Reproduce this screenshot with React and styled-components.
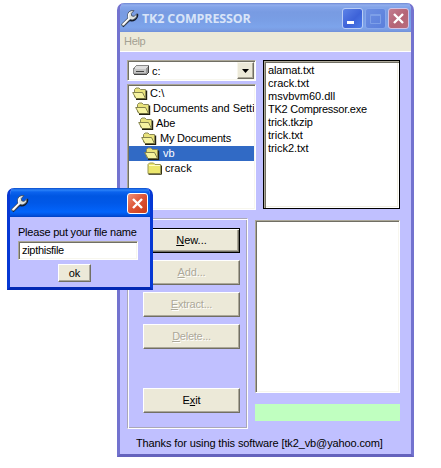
import React from "react";
import styled, { createGlobalStyle, css } from "styled-components";

const Global = createGlobalStyle`
  * { box-sizing: border-box; }
  body { margin: 0; background: #fff; overflow: hidden; }
  #root { font: 11px/13px "Liberation Sans", Arial, sans-serif; color: #000; }
`;

const Desktop = styled.div`
  position: relative;
  width: 441px;
  height: 468px;
  padding: 3px 0 0 117px;
`;

const Text = styled.span`
  white-space: pre;
  letter-spacing: ${(p) => p.$track || 0}px;
`;

const sunken = css`
  background: #fff;
  border: 1px solid;
  border-color: #aca899 #fff #fff #aca899;
  box-shadow: inset 1px 1px #716f64, inset -1px -1px #f7f6ee;
`;

const MainWindow = styled.div`
  width: 297px;
  height: 454px;
  display: flex;
  flex-direction: column;
  border: solid #7373cf;
  border-width: 0 3px 3px;
  border-bottom-color: #6462bd;
  border-radius: 7px 7px 0 0;
  background: #c0c0ff;
  overflow: hidden;
`;

const TitleBar = styled.div`
  height: 29px;
  flex: none;
  margin: 0 -3px;
  display: flex;
  align-items: center;
  padding: 2px 5px 0 3px;
  background: linear-gradient(#6f88d3 0, #91aeed 2px, #83a4e9 4px, #789be2 9px, #799ee5 17px, #7da4eb 24px, #7a9ce2 27px, #7090da);
`;

const WindowTitle = styled.div`
  flex: 1;
  padding-left: 3px;
  color: #d8e4f8;
  font: bold 12.5px/16px "Open Sans", "Noto Sans", sans-serif;
  white-space: nowrap;
  letter-spacing: -0.15px;
`;

const TitleButtons = styled.div`
  display: flex;
  gap: 2px;
`;

const captionFills = {
  blue: "linear-gradient(135deg, #5d83e8, #3d62d8 55%, #4c7be8)",
  dim: "linear-gradient(135deg, #6c8ee2, #5a7fdc)",
  rose: "linear-gradient(135deg, #c27d90, #b56476 55%, #b86c7c)",
  red: "linear-gradient(135deg, #ee9078, #dc5334 50%, #cb3c18)",
};

const captionEdges = { blue: "#b9cdf6", dim: "#86a6eb", rose: "#d3c2e4", red: "#fff" };

const CaptionButton = styled.div`
  width: 21px;
  height: 21px;
  border: 1px solid ${(p) => captionEdges[p.$tone]};
  border-radius: 3px;
  background: ${(p) => captionFills[p.$tone]};
  svg { display: block; }
`;

const MenuBar = styled.div`
  height: 20px;
  flex: none;
  padding: 3px 4px;
  background: #ece9d8;
  border-bottom: 1px solid #fff;
  color: #a3a092;
`;

const Body = styled.div`
  flex: 1;
  padding: 8px 11px 0 7px;
`;

const TopRow = styled.div`
  display: flex;
  justify-content: space-between;
  height: 150px;
`;

const DriveColumn = styled.div`
  width: 129px;
  display: flex;
  flex-direction: column;
  gap: 3px;
`;

const DriveSelect = styled.div`
  ${sunken}
  height: 21px;
  display: flex;
  align-items: center;
  padding: 1px 1px 1px 5px;
  gap: 2px;
`;

const DriveName = styled.div`
  flex: 1;
  padding-top: 2px;
`;

const DropButton = styled.div`
  width: 17px;
  height: 17px;
  display: grid;
  place-items: center;
  background: #ece9d8;
  border: 1px solid;
  border-color: #f8f6ec #716f64 #716f64 #f8f6ec;
  box-shadow: inset -1px -1px #aca899;
`;

const DirectoryList = styled.div`
  ${sunken}
  height: 126px;
  padding: 1px;
  overflow: hidden;
`;

const DirectoryRow = styled.div`
  height: 15px;
  display: flex;
  align-items: center;
  padding-left: ${(p) => p.$indent}px;
  gap: ${(p) => p.$gap}px;
  background: ${(p) => (p.$selected ? "#316ac5" : "transparent")};
  color: ${(p) => (p.$selected ? "#fff" : "#000")};
  overflow: hidden;
  svg { flex: none; }
`;

const FileList = styled.div`
  width: 137px;
  height: 149px;
  padding: 3px 4px;
  background: #fff;
  border: 1px solid #000;
  box-shadow: inset 1px 1px #aca899, inset 2px 2px #716f64, inset -1px -1px #fff, inset -2px -2px #f1efe2;
`;

const FileRow = styled.div`
  height: 13px;
`;

const BottomRow = styled.div`
  display: flex;
  justify-content: space-between;
  margin-top: 8px;
  height: 211px;
`;

const ActionFrame = styled.div`
  width: 121px;
  border: 1px solid #aaa8b8;
  border-right-color: #fff;
  border-bottom-color: #fff;
  box-shadow: inset 1px 1px #fff, inset -1px -1px #aaa8b8;
  padding: 9px 7px 0 15px;
  display: flex;
  flex-direction: column;
  gap: 7px;
`;

const raised = css`
  display: flex;
  align-items: center;
  justify-content: center;
  background: #ece9d8;
  border: 1px solid;
  border-color: #fff #716f64 #716f64 #fff;
  box-shadow: inset -1px -1px #aca899;
`;

const ActionButton = styled.div`
  ${raised}
  height: 25px;
  ${(p) => p.$last && "margin-top: 32px;"}
  ${(p) => p.$focused && "border-color: #000; box-shadow: inset 1px 1px #fff, inset -1px -1px #716f64, inset -2px -2px #aca899;"}
  ${(p) => p.$disabled && "color: #aca899; text-shadow: 1px 1px #fff;"}
`;

const OutputColumn = styled.div`
  width: 145px;
  padding-top: 2px;
  display: flex;
  flex-direction: column;
  gap: 11px;
`;

const OutputList = styled.div`
  ${sunken}
  height: 173px;
`;

const Progress = styled.div`
  height: 17px;
  background: #c0ffc0;
`;

const Footer = styled.div`
  padding: 8px 0 0 9px;
`;

const Dialog = styled.div`
  position: absolute;
  left: 7px;
  top: 188px;
  width: 146px;
  height: 102px;
  border: solid #0638d4;
  border-width: 0 3px 3px;
  border-bottom-color: #0429b4;
  border-radius: 7px 7px 0 0;
  background: #c0c0ff;
  overflow: hidden;
`;

const DialogTitle = styled(TitleBar)`
  justify-content: space-between;
  background: linear-gradient(#0a4bc9 0, #2b82f8 2px, #0b63ee 4px, #0056e2 8px, #0058e8 15px, #0264fb 24px, #0253e0 27px, #0040c4);
`;

const DialogBody = styled.div`
  padding: 9px 12px 0 8px;
  display: flex;
  flex-direction: column;
`;

const NameInput = styled.div`
  ${sunken}
  height: 19px;
  margin-top: 2px;
  padding: 2px 3px;
`;

const OkButton = styled.div`
  ${raised}
  width: 33px;
  height: 18px;
  margin: 4px 0 0 40px;
`;

function Wrench() {
  return (
    <svg width="19" height="19" viewBox="0 0 19 19">
      <path d="M2.800 17.500 9.500 11Q12 12.500 15 10.500Q17.800 8.500 17.300 5" fill="none" stroke="#101828" strokeWidth="1.800" />
      <path d="M1.500 15.200 8 8.800Q6.800 5.200 8.800 3Q10.800 .900 14 1.600L11.300 4.500 11.800 7 14.300 7.300 16.900 4.600Q17.300 8 15 9.800Q12.800 11.500 10 10.600L3.800 17Q1.300 17.500 1.500 15.200z" fill="#dfe2df" stroke="#3c4656" strokeWidth=".8" />
      <path d="M3 15.500 9 9.600Q7.800 5.500 10 3.500" fill="none" stroke="#fff" strokeWidth="1.100" />
    </svg>
  );
}

function CloseGlyph() {
  return (
    <svg width="19" height="19">
      <path d="M5 5 14 14M14 5 5 14" stroke="#fff" strokeWidth="2.400" />
    </svg>
  );
}

function MinimizeGlyph() {
  return (
    <svg width="19" height="19">
      <path d="M4 13.500H11" stroke="#fff" strokeWidth="3" />
    </svg>
  );
}

function MaximizeGlyph() {
  return (
    <svg width="19" height="19">
      <path d="M4.500 5.500H14.500V14.500H4.500zM4.500 6.500H14.500" stroke="#7d9fe8" fill="none" />
    </svg>
  );
}

function DriveIcon() {
  return (
    <svg width="17" height="11" viewBox="0 0 17 11" shapeRendering="crispEdges">
      <path d="M3 1H16V7L14 9H1V4z" fill="#999" />
      <path d="M3 1H15L13 4H1z" fill="#dedede" />
      <path d="M1 4H13V8H1z" fill="#c4c4c4" />
      <path d="M.500 4 3.500 .500H15.500M.500 4V8.500" stroke="#888" fill="none" />
      <path d="M1 9.500H14M14.500 9V8M15.500 8V1M3 6.500H11" stroke="#444" fill="none" />
    </svg>
  );
}

function OpenFolder() {
  return (
    <svg width="16" height="13" viewBox="0 0 16 13">
      <path d="M2.500 10V2.500L4 1H7L8.500 2.500H13.500V11.500z" fill="#e9e37c" stroke="#8c8a58" />
      <path d="M.700 5.500H10.500L13.500 11.500H4z" fill="#f6f3a0" stroke="#85834d" />
      <path d="M4 12.300H14.600V3.500" fill="none" stroke="#222010" strokeWidth="1.200" />
    </svg>
  );
}

function ClosedFolder() {
  return (
    <svg width="16" height="13" viewBox="0 0 16 13">
      <path d="M1 11.500V2.500L2.500 1H6.500L8 2.500H13.500V11.500z" fill="#ece76d" stroke="#9b9850" />
      <path d="M2 3.500H13" stroke="#fffcc8" />
      <path d="M1.500 12.300H14.500V3.500" fill="none" stroke="#333116" />
    </svg>
  );
}

const directories = [
  { name: "C:\\", indent: 3, gap: 2, track: 0.1 },
  { name: "Documents and Settings", indent: 6, gap: 2, track: -0.03 },
  { name: "Abe", indent: 9, gap: 2, track: -0.1 },
  { name: "My Documents", indent: 12, gap: 3, track: -0.2 },
  { name: "vb", indent: 15, gap: 3, track: 0, selected: true },
  { name: "crack", indent: 18, gap: 2, track: 0.1, closed: true },
];

const files = [
  ["alamat.txt", -0.15],
  ["crack.txt", 0],
  ["msvbvm60.dll", 0],
  ["TK2 Compressor.exe", -0.25],
  ["trick.tkzip", -0.1],
  ["trick.txt", 0],
  ["trick2.txt", -0.05],
];

const actions = [
  { before: "", key: "N", after: "ew...", track: 0, focused: true },
  { before: "", key: "A", after: "dd...", track: -0.1, disabled: true },
  { before: "", key: "E", after: "xtract...", track: -0.2, disabled: true },
  { before: "", key: "D", after: "elete...", track: -0.25, disabled: true },
  { before: "E", key: "x", after: "it", track: -0.1, last: true },
];

export default function App() {
  return (
    <Desktop>
      <Global />
      <MainWindow>
        <TitleBar>
          <Wrench />
          <WindowTitle>TK2 COMPRESSOR</WindowTitle>
          <TitleButtons>
            <CaptionButton $tone="blue"><MinimizeGlyph /></CaptionButton>
            <CaptionButton $tone="dim"><MaximizeGlyph /></CaptionButton>
            <CaptionButton $tone="rose"><CloseGlyph /></CaptionButton>
          </TitleButtons>
        </TitleBar>
        <MenuBar><Text $track={-0.3}>Help</Text></MenuBar>
        <Body>
          <TopRow>
            <DriveColumn>
              <DriveSelect>
                <DriveIcon />
                <DriveName>c:</DriveName>
                <DropButton>
                  <svg width="7" height="4"><path d="M0 0H7L3.500 4z" /></svg>
                </DropButton>
              </DriveSelect>
              <DirectoryList>
                {directories.map((d) => (
                  <DirectoryRow key={d.name} $indent={d.indent} $gap={d.gap} $selected={d.selected}>
                    {d.closed ? <ClosedFolder /> : <OpenFolder />}
                    <Text $track={d.track}>{d.name}</Text>
                  </DirectoryRow>
                ))}
              </DirectoryList>
            </DriveColumn>
            <FileList>
              {files.map(([name, track]) => (
                <FileRow key={name}><Text $track={track}>{name}</Text></FileRow>
              ))}
            </FileList>
          </TopRow>
          <BottomRow>
            <ActionFrame>
              {actions.map((a) => (
                <ActionButton key={a.key} $focused={a.focused} $disabled={a.disabled} $last={a.last}>
                  <Text $track={a.track}>{a.before}<u>{a.key}</u>{a.after}</Text>
                </ActionButton>
              ))}
            </ActionFrame>
            <OutputColumn>
              <OutputList />
              <Progress />
            </OutputColumn>
          </BottomRow>
          <Footer><Text $track={-0.12}>Thanks for using this software [tk2_vb@yahoo.com]</Text></Footer>
        </Body>
      </MainWindow>
      <Dialog>
        <DialogTitle>
          <Wrench />
          <CaptionButton $tone="red"><CloseGlyph /></CaptionButton>
        </DialogTitle>
        <DialogBody>
          <Text $track={-0.22}>Please put your file name</Text>
          <NameInput><Text $track={-0.3}>zipthisfile</Text></NameInput>
          <OkButton><Text>ok</Text></OkButton>
        </DialogBody>
      </Dialog>
    </Desktop>
  );
}
